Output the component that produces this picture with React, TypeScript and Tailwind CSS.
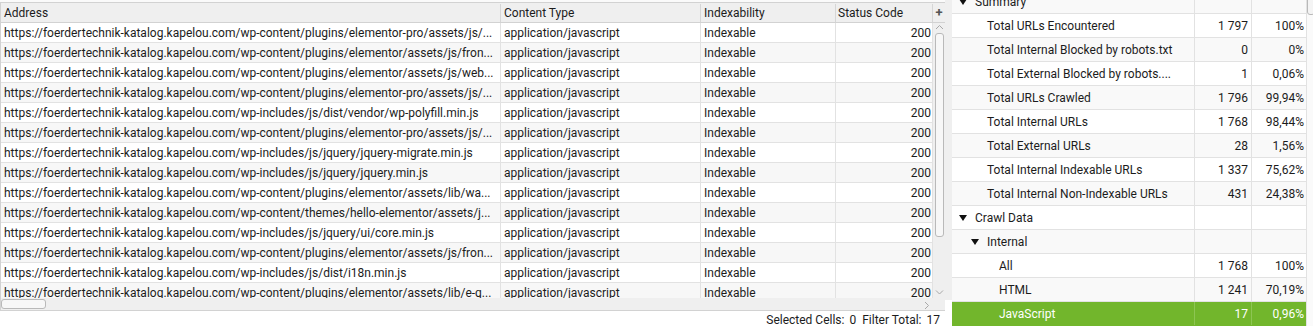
import React from "react";

const base = "https://foerdertechnik-katalog.kapelou.com/";
const urls = [
  "wp-content/plugins/elementor-pro/assets/js/...",
  "wp-content/plugins/elementor/assets/js/fron...",
  "wp-content/plugins/elementor/assets/js/web...",
  "wp-content/plugins/elementor-pro/assets/js/...",
  "wp-includes/js/dist/vendor/wp-polyfill.min.js",
  "wp-content/plugins/elementor-pro/assets/js/...",
  "wp-includes/js/jquery/jquery-migrate.min.js",
  "wp-includes/js/jquery/jquery.min.js",
  "wp-content/plugins/elementor/assets/lib/wa...",
  "wp-content/themes/hello-elementor/assets/j...",
  "wp-includes/js/jquery/ui/core.min.js",
  "wp-content/plugins/elementor/assets/js/fron...",
  "wp-includes/js/dist/i18n.min.js",
  "wp-content/plugins/elementor/assets/lib/e-g...",
];

type Item = {
  label: string;
  level: number;
  tree?: boolean;
  count?: string;
  pct?: string;
  selected?: boolean;
};

const items: Item[] = [
  { label: "Summary", level: 0, tree: true },
  { label: "Total URLs Encountered", level: 1, count: "1 797", pct: "100%" },
  { label: "Total Internal Blocked by robots.txt", level: 1, count: "0", pct: "0%" },
  { label: "Total External Blocked by robots....", level: 1, count: "1", pct: "0,06%" },
  { label: "Total URLs Crawled", level: 1, count: "1 796", pct: "99,94%" },
  { label: "Total Internal URLs", level: 1, count: "1 768", pct: "98,44%" },
  { label: "Total External URLs", level: 1, count: "28", pct: "1,56%" },
  { label: "Total Internal Indexable URLs", level: 1, count: "1 337", pct: "75,62%" },
  { label: "Total Internal Non-Indexable URLs", level: 1, count: "431", pct: "24,38%" },
  { label: "Crawl Data", level: 0, tree: true },
  { label: "Internal", level: 1, tree: true },
  { label: "All", level: 2, count: "1 768", pct: "100%" },
  { label: "HTML", level: 2, count: "1 241", pct: "70,19%" },
  { label: "JavaScript", level: 2, count: "17", pct: "0,96%", selected: true },
];

const Tri = () => (
  <svg width="8" height="6" viewBox="0 0 8 6" className="shrink-0">
    <polygon points="0,0 8,0 4,6" fill="#111" />
  </svg>
);

const Chevron = ({ dir }: { dir: "up" | "down" | "right" }) => {
  const d =
    dir === "up" ? "M1 5 L4.5 1.5 L8 5" : dir === "down" ? "M1 1.5 L4.5 5 L8 1.5" : "M2 1 L5.5 4.5 L2 8";
  return (
    <svg width="9" height="9" viewBox="0 0 9 9">
      <path d={d} fill="none" stroke="#a8a8a8" strokeWidth="1" />
    </svg>
  );
};

export default function App() {
  return (
    <div
      className="w-[1313px] h-[326px] flex overflow-hidden bg-white text-[12px] text-[#1c1c1c]"
      style={{ fontFamily: "Roboto, 'Liberation Sans', sans-serif" }}
    >
      {/* Left pane */}
      <div className="w-[945px] shrink-0 flex flex-col">
        <div className="h-[2px] bg-[#fafafa]" />
        <div className="h-[309px] flex border-t border-b border-[#d2d2d2]">
          <div className="w-[933px] flex flex-col border-l border-[#d2d2d2]">
            {/* header */}
            <div className="h-[20px] flex bg-[#efefef] border-b border-[#d2d2d2] leading-[18px] pt-[1px]">
              <div className="w-[500px] pl-[3px] border-r border-[#d6d6d6]">Address</div>
              <div className="w-[200px] pl-[3px] border-r border-[#d6d6d6]">Content Type</div>
              <div className="w-[135px] pl-[3px] border-r border-[#d6d6d6]">Indexability</div>
              <div className="w-[97px] pl-[2px] border-r border-[#d6d6d6]">Status Code</div>
            </div>
            {/* rows */}
            <div className="h-[275px] overflow-hidden">
              {urls.map((u, i) => (
                <div
                  key={i}
                  className={`h-[20px] flex border-b border-[#e2e2e2] leading-[19px] whitespace-nowrap ${
                    i % 2 === 1 ? "bg-[#f7f7f7]" : "bg-white"
                  }`}
                >
                  <div className="w-[500px] pl-[3px] pt-[1px] border-r border-[#e2e2e2] overflow-hidden">{base + u}</div>
                  <div className="w-[200px] pl-[3px] pt-[1px] border-r border-[#e2e2e2]">application/javascript</div>
                  <div className="w-[135px] pl-[3px] pt-[1px] border-r border-[#e2e2e2]">Indexable</div>
                  <div className="w-[97px] pr-[1px] pt-[1px] text-right border-r border-[#e2e2e2]">200</div>
                </div>
              ))}
            </div>
            {/* horizontal scrollbar */}
            <div className="h-[12px] flex items-center bg-[#efefef]">
              <div className="w-[45px] h-[10px] rounded-[3px] border border-[#b9b9b9] bg-[#f7f7f7]" />
              <div className="flex-1" />
              <div className="mr-[1px] mt-[2px]">
                <Chevron dir="right" />
              </div>
            </div>
          </div>
          {/* vertical scrollbar column */}
          <div className="w-[12px] flex flex-col bg-[#efefef]">
            <div className="h-[20px] flex items-center justify-center border-b border-[#d2d2d2] text-[#555] font-bold text-[13px] leading-none">
              +
            </div>
            <div className="flex justify-center mt-[1px]">
              <Chevron dir="up" />
            </div>
            <div className="mx-auto w-[9px] h-[204px] rounded-[3px] border border-[#b9b9b9] bg-[#f7f7f7]" />
            <div className="flex-1" />
            <div className="flex justify-center mb-[12px]">
              <Chevron dir="down" />
            </div>
          </div>
        </div>
        <div className="flex-1 flex items-center justify-end pr-[5px] pt-[2px] leading-none">
          <span>Selected Cells:</span>
          <span className="ml-[5px]">0</span>
          <span className="ml-[6px]">Filter Total:</span>
          <span className="ml-[5px]">17</span>
        </div>
      </div>

      {/* splitter */}
      <div className="w-[7px] shrink-0 flex flex-col">
        <div className="h-[300px] bg-[#efefef]" />
        <div className="flex-1 bg-white" />
      </div>

      {/* Right pane */}
      <div className="flex-1 flex">
        <div className="flex-1 flex flex-col overflow-hidden">
          <div className="mt-[-10px]">
            {items.map((it, i) => {
              const textLeft = 23 + it.level * 12;
              return (
                <div
                  key={i}
                  className={`h-[24px] flex border-b leading-[23px] whitespace-nowrap ${
                    it.selected
                      ? "bg-[#72b62c] text-white border-[#72b62c]"
                      : i % 2 === 0
                      ? "bg-[#f9f9f9] border-[#e2e2e2]"
                      : "bg-white border-[#e2e2e2]"
                  }`}
                >
                  <div
                    className={`w-[243px] flex items-center pt-[1px] border-r ${
                      it.selected ? "border-[#8dc553]" : "border-[#e2e2e2]"
                    }`}
                  >
                    {it.tree ? (
                      <div className="flex items-center" style={{ paddingLeft: textLeft - 16 }}>
                        <Tri />
                        <span className="ml-[8px]">{it.label}</span>
                      </div>
                    ) : (
                      <span style={{ paddingLeft: textLeft }}>{it.label}</span>
                    )}
                  </div>
                  <div
                    className={`w-[57px] text-right pr-[3px] pt-[1px] border-r ${
                      it.selected ? "border-[#8dc553]" : "border-[#e2e2e2]"
                    }`}
                  >
                    {it.count ?? ""}
                  </div>
                  <div className="flex-1 text-right pr-[2px] pt-[1px]">{it.pct ?? ""}</div>
                </div>
              );
            })}
          </div>
        </div>
        <div className="w-[7px] bg-[#fafafa] border-l border-[#e2e2e2] flex flex-col">
          <div className="mt-[-4px] h-[19px] w-[8px] rounded-[3px] border border-[#b9b9b9] bg-[#f4f4f4]" />
        </div>
      </div>
    </div>
  );
}
